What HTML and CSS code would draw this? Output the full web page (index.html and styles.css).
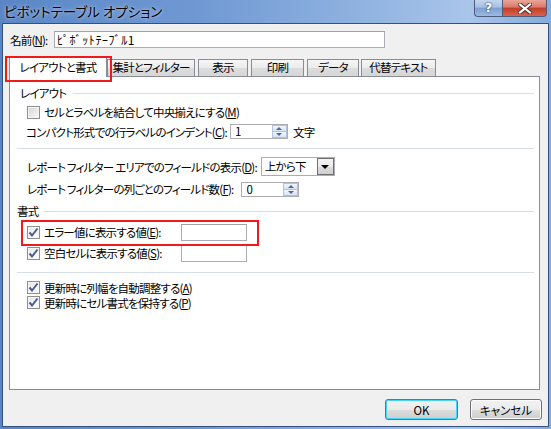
FILE: index.html
```html
<!DOCTYPE html>
<html lang="ja">
<head>
<meta charset="utf-8">
<title>ピボットテーブル オプション</title>
<link rel="stylesheet" href="styles.css">
</head>
<body>
<div class="window">
  <div class="titlebar">
    <span class="title">ピボットテーブル オプション</span>
    <div class="caption-btns">
      <div class="cap help">?</div>
      <div class="cap close">
        <svg width="14" height="11" viewBox="0 0 14 11"><path d="M2 1.5 L12 9.5 M12 1.5 L2 9.5" stroke="#40302c" stroke-width="4" stroke-linecap="square"/><path d="M2 1.5 L12 9.5 M12 1.5 L2 9.5" stroke="#fff" stroke-width="2.2" stroke-linecap="square"/></svg>
      </div>
    </div>
  </div>
  <div class="client">
    <div class="name-row">
      <span class="name-label">名前(<u>N</u>):</span>
      <div class="textbox name-box">ﾋﾟﾎﾞｯﾄﾃｰﾌﾞﾙ1</div>
    </div>
    <div class="tabs">
      <div class="tab selected">レイアウトと書式</div>
      <div class="tab">集計とフィルター</div>
      <div class="tab">表示</div>
      <div class="tab">印刷</div>
      <div class="tab">データ</div>
      <div class="tab">代替テキスト</div>
    </div>
    <div class="panel">
      <div class="row group-head"><span class="head-a">レイアウト</span><span class="line"></span></div>
      <div class="row row-b indent">
        <span class="cb"></span><span class="cb-text">セルとラベルを結合して中央揃えにする(<u>M</u>)</span>
      </div>
      <div class="row row-c indent-t">
        <span>コンパクト形式での行ラベルのインデント(<u>C</u>):</span>
        <div class="spin spin-c"><span class="spin-val">1</span><span class="spin-btns"><i class="up"></i><i class="down"></i></span></div>
        <span class="unit">文字</span>
      </div>
      <div class="row sep sep1"><span class="line"></span></div>
      <div class="row row-d indent">
        <span>レポート フィルター エリアでのフィールドの表示(<u>D</u>):</span>
        <div class="combo"><span class="combo-val">上から下</span><span class="combo-btn"><i></i></span></div>
      </div>
      <div class="row row-e indent">
        <span>レポート フィルターの列ごとのフィールド数(<u>F</u>):</span>
        <div class="spin spin-e"><span class="spin-val">0</span><span class="spin-btns"><i class="up"></i><i class="down"></i></span></div>
      </div>
      <div class="row group-head row-f"><span class="head-b">書式</span><span class="line"></span></div>
      <div class="row row-g indent mark">
        <span class="val-label"><span class="cb checked"><svg width="11" height="11" viewBox="0 0 11 11"><path d="M1.5 5.5 L4 8.5 L9.5 1.5" fill="none" stroke="#4a5d92" stroke-width="2"/></svg></span><span class="cb-text">エラー値に表示する値(<u>E</u>):</span></span>
        <div class="textbox val-box"></div>
      </div>
      <div class="row row-h indent">
        <span class="val-label"><span class="cb checked"><svg width="11" height="11" viewBox="0 0 11 11"><path d="M1.5 5.5 L4 8.5 L9.5 1.5" fill="none" stroke="#4a5d92" stroke-width="2"/></svg></span><span class="cb-text">空白セルに表示する値(<u>S</u>):</span></span>
        <div class="textbox val-box"></div>
      </div>
      <div class="row sep sep2"><span class="line"></span></div>
      <div class="row row-i indent">
        <span class="cb checked"><svg width="11" height="11" viewBox="0 0 11 11"><path d="M1.5 5.5 L4 8.5 L9.5 1.5" fill="none" stroke="#4a5d92" stroke-width="2"/></svg></span><span class="cb-text">更新時に列幅を自動調整する(<u>A</u>)</span>
      </div>
      <div class="row row-i indent">
        <span class="cb checked"><svg width="11" height="11" viewBox="0 0 11 11"><path d="M1.5 5.5 L4 8.5 L9.5 1.5" fill="none" stroke="#4a5d92" stroke-width="2"/></svg></span><span class="cb-text">更新時にセル書式を保持する(<u>P</u>)</span>
      </div>
    </div>
    <div class="buttons">
      <div class="btn default">OK</div>
      <div class="btn">キャンセル</div>
    </div>
  </div>
</div>
</body>
</html>
```
FILE: styles.css
```css
* { box-sizing: border-box; }
html, body { margin: 0; padding: 0; }
body {
  width: 551px;
  height: 429px;
  overflow: hidden;
  font-family: "Noto Sans CJK JP", "Noto Sans", sans-serif;
  font-size: 11.5px;
  letter-spacing: -0.8px;
  line-height: 14px;
  color: #000;
  font-feature-settings: "palt";
}
u { text-decoration: underline; text-underline-offset: 1px; }

.window {
  width: 551px;
  height: 429px;
  display: flex;
  flex-direction: column;
  background: linear-gradient(to right, #5a86c6 0%, #6f98d3 35%, #8fb2e0 65%, #a9c5ea 85%, #86abdc 100%);
}
.titlebar {
  height: 23px;
  display: flex;
  align-items: flex-start;
  justify-content: space-between;
  padding-left: 4px;
  padding-right: 4px;
  flex: none;
}
.title {
  font-size: 13.5px;
  letter-spacing: 0;
  line-height: 14px;
  margin-top: 4px;
  color: #000;
  text-shadow: 0 0 5px rgba(255,255,255,.55), 0 0 2px rgba(255,255,255,.4);
}
.caption-btns { display: flex; }
.cap {
  height: 17px;
  border: 1px solid #4b5d7a;
  border-top: none;
  display: flex;
  align-items: center;
  justify-content: center;
}
.help {
  width: 28px;
  border-radius: 0 0 0 4px;
  border-right: none;
  background: linear-gradient(#c3d6ee 0%, #a6c0e3 45%, #7e9fd0 50%, #9db9e3 100%);
  color: #fff;
  font-family: "DejaVu Sans", sans-serif;
  font-weight: bold;
  font-size: 13px;
  letter-spacing: 0;
  text-shadow: 0 0 2px #2c3f63, 0 0 1px #2c3f63;
}
.close {
  width: 45px;
  border-radius: 0 0 4px 0;
  background: linear-gradient(#e9a698 0%, #d9786a 45%, #c23d2a 50%, #d8634d 100%);
}

.client {
  flex: 1;
  margin: 0 2px 2px 2px;
  border: 1px solid #34507f;
  background: #f0f0f0;
  display: flex;
  flex-direction: column;
}

.name-row {
  margin-top: 7px;
  height: 17px;
  display: flex;
  align-items: center;
  padding-left: 7px;
  white-space: nowrap;
}
.name-label { width: 44px; flex: none; }
.textbox {
  background: #fff;
  border: 1px solid #abadb3;
  border-top-color: #a0a2a8;
}
.name-box {
  width: 331px;
  height: 17px;
  padding-left: 2px;
  line-height: 15px;
  font-size: 12px;
  letter-spacing: 0.6px;
  font-feature-settings: normal;
}

.tabs {
  margin-top: 9px;
  height: 20px;
  margin-bottom: -1px;
  padding-left: 6px;
  display: flex;
  align-items: flex-end;
  position: relative;
  z-index: 1;
}
.tab {
  height: 17px;
  margin-bottom: 1px;
  border: 1px solid #898c95;
  border-bottom: none;
  background: linear-gradient(#f6f6f6 0%, #ebebeb 50%, #dcdcdc 51%, #d6d6d6 100%);
  text-align: center;
  line-height: 15px;
  white-space: nowrap;
}
.tab:nth-child(1) { width: 98px; }
.tab:nth-child(2) { width: 88px; margin-left: 0; }
.tab:nth-child(3) { width: 50px; margin-left: 3px; }
.tab:nth-child(4) { width: 53px; margin-left: 3px; }
.tab:nth-child(5) { width: 52px; margin-left: 3px; }
.tab:nth-child(6) { width: 75px; margin-left: 2px; }
.tab.selected {
  height: 20px;
  margin-bottom: 0;
  background: #fff;
  line-height: 18px;
  position: relative;
}
.tab.selected::after {
  content: "";
  position: absolute;
  left: -5px;
  top: -2px;
  width: 103px;
  height: 22px;
  border: 2px solid #f01a1a;
}

.panel {
  height: 314px;
  margin: 0 8px 0 6px;
  border: 1px solid #898c95;
  background: #fff;
  padding: 7px 5px 0 7px;
  display: flex;
  flex-direction: column;
}
.row {
  display: flex;
  align-items: center;
  white-space: nowrap;
  flex: none;
}
.line {
  flex: 1;
  height: 1px;
  background: #d5dfe5;
}
.group-head { height: 18px; }
.head-a { margin-left: 3px; margin-right: 7px; }
.head-b { margin-right: 6px; }
.row-f { height: 22px; }
.indent { padding-left: 10px; }
.indent-t { padding-left: 9px; }
.row-b { height: 20px; }
.row-c { height: 19px; }
.sep1 { height: 14px; }
.row-d { height: 23px; }
.row-e { height: 22px; }
.row-g { height: 20px; position: relative; }
.row-h { height: 22px; }
.sep2 { height: 16px; }
.row-i { height: 15px; }

.mark::after {
  content: "";
  position: absolute;
  left: 4px;
  top: -2px;
  width: 234px;
  height: 22px;
  border: 2px solid #f01a1a;
}

.cb {
  width: 13px;
  height: 13px;
  flex: none;
  border: 1px solid #8e8f8f;
  box-shadow: inset 0 0 0 1px #f6f6f6;
  background: linear-gradient(135deg, #d4d4d4 0%, #eeeeee 70%, #fafafa 100%);
  display: flex;
  align-items: center;
  justify-content: center;
}
.cb.checked {
  background: linear-gradient(135deg, #e6e6e6 0%, #f8f8f8 70%, #ffffff 100%);
}
.cb-text { margin-left: 4px; }

.val-label { display: flex; align-items: center; width: 154px; }
.val-box { width: 66px; height: 17px; }
.row-h .val-box { height: 18px; }

.spin {
  height: 15px;
  display: flex;
  background: #fff;
  border: 1px solid #abadb3;
  align-items: stretch;
}
.spin-c { width: 58px; margin-left: 3px; }
.spin-e { width: 58px; margin-left: 8px; }
.spin-val { flex: 1; padding-left: 4px; line-height: 13px; }
.spin-btns {
  width: 15px;
  display: flex;
  flex-direction: column;
}
.spin-btns i {
  flex: 1;
  display: flex;
  align-items: center;
  justify-content: center;
  background: linear-gradient(#f2f6fb, #d7e3f1);
  border: 1px solid #b3c3da;
}
.spin-btns i + i { border-top: none; }
.spin-btns i::before {
  content: "";
  border-left: 3px solid transparent;
  border-right: 3px solid transparent;
}
.spin-btns .up::before { border-bottom: 3px solid #4d6a9e; }
.spin-btns .down::before { border-top: 3px solid #4d6a9e; }
.unit { margin-left: 5px; }

.combo {
  width: 74px;
  height: 19px;
  margin-left: 4px;
  display: flex;
  border: 1px solid #abadb3;
  background: #fff;
}
.combo-val { flex: 1; padding-left: 3px; line-height: 17px; }
.combo-btn {
  width: 17px;
  border: 1px solid #707070;
  background: linear-gradient(#f2f2f2 0%, #ebebeb 50%, #dddddd 51%, #cfcfcf 100%);
  display: flex;
  align-items: center;
  justify-content: center;
}
.combo-btn i {
  border-left: 4px solid transparent;
  border-right: 4px solid transparent;
  border-top: 4px solid #000;
}

.buttons {
  margin-top: 9px;
  height: 21px;
  display: flex;
  justify-content: flex-end;
  gap: 12px;
  padding-right: 6px;
}
.btn {
  width: 72px;
  height: 21px;
  border: 1px solid #707070;
  border-radius: 3px;
  background: linear-gradient(#f2f2f2 0%, #ebebeb 50%, #dddddd 51%, #cfcfcf 100%);
  box-shadow: inset 0 0 0 1px #fcfcfc;
  display: flex;
  align-items: center;
  justify-content: center;
  letter-spacing: 0;
}
.btn.default {
  width: 73px;
  border-color: #3c7fb1;
  box-shadow: inset 0 0 0 1px #48d4f8;
}
```
